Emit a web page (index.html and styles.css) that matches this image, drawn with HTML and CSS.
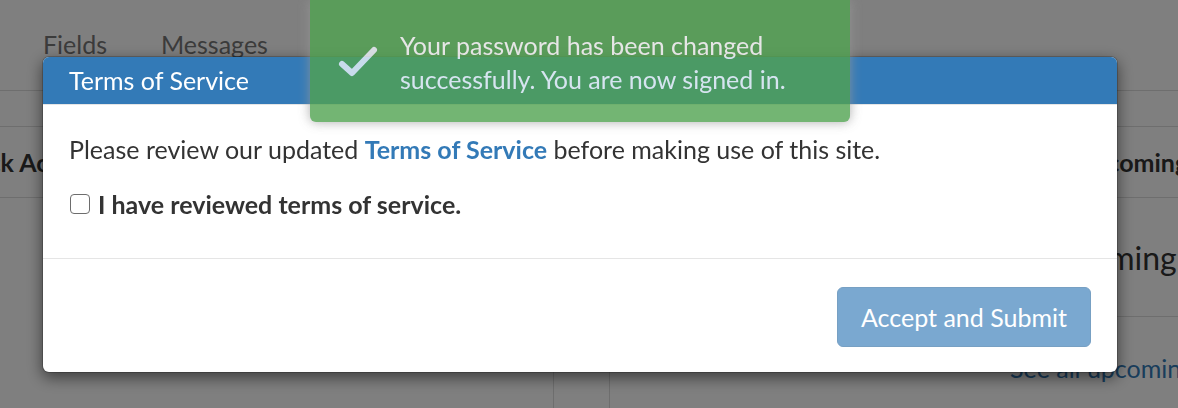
FILE: index.html
```html
<!DOCTYPE html>
<html lang="en">
<head>
<meta charset="utf-8">
<title>Terms of Service</title>
<link rel="stylesheet" href="styles.css">
</head>
<body>
<div class="page">
  <nav class="tabs">
    <a class="tab">Fields</a>
    <a class="tab">Messages</a>
  </nav>
  <div class="columns">
    <section class="col col-left">
      <div class="panel-head"><h3 class="head-left">Quick Access</h3></div>
    </section>
    <section class="col col-right">
      <div class="panel-head"><h3 class="head-right">Upcoming Events</h3></div>
      <div class="panel-row"><span class="big">Upcoming</span></div>
      <a class="more">See all upcoming events</a>
    </section>
  </div>
</div>

<div class="backdrop"></div>

<div class="modal" role="dialog">
  <div class="modal-header"><h4 class="modal-title">Terms of Service</h4></div>
  <div class="modal-body">
    <p class="intro">Please review our updated <a class="link">Terms of Service</a> before making use of this site.</p>
    <label class="check"><input type="checkbox" class="box"> I have reviewed terms of service.</label>
  </div>
  <div class="modal-footer">
    <button class="btn" disabled>Accept and Submit</button>
  </div>
</div>

<div class="toast">
  <svg class="toast-icon" width="44" height="36" viewBox="0 0 44 36" aria-hidden="true">
    <path d="M6 20 L16 29 L38 6" fill="none" stroke="#eef4fa" stroke-width="6" stroke-linecap="round" stroke-linejoin="round"/>
  </svg>
  <div class="toast-msg">Your password has been changed successfully. You are now signed in.</div>
</div>
</body>
</html>
```

FILE: styles.css
```css
html, body {
  margin: 0;
  padding: 0;
}
body {
  width: 1178px;
  height: 408px;
  overflow: hidden;
  background: #ffffff;
  font-family: Lato, "Open Sans", "Liberation Sans", sans-serif;
  color: #333333;
}

.page {
  display: flex;
  flex-direction: column;
}

.tabs {
  display: flex;
  height: 91px;
  box-sizing: border-box;
  border-bottom: 1px solid #dddddd;
  padding: 28px 0 0 43px;
  gap: 54px;
}
.tab {
  font-size: 25px;
  line-height: 32px;
  color: #777777;
}

.columns {
  display: flex;
  gap: 55px;
}
.col {
  flex: 0 0 auto;
}
.col-left {
  width: 553px;
  border-right: 1px solid #dddddd;
  height: 320px;
}
.col-right {
  flex: 1 1 auto;
  border-left: 1px solid #dddddd;
  height: 320px;
  overflow: hidden;
}
.panel-head {
  margin-top: 35px;
  height: 70px;
  border-top: 1px solid #dddddd;
  border-bottom: 1px solid #dddddd;
  display: flex;
  align-items: center;
}
.panel-head h3 {
  margin: 0;
  font-size: 25px;
  font-weight: 700;
  white-space: nowrap;
}
.head-left {
  margin-left: -52px !important;
}
.head-right {
  padding-left: 465px;
}
.panel-row {
  height: 118px;
  border-bottom: 1px solid #dddddd;
  display: flex;
  align-items: center;
  padding-left: 424px;
}
.big {
  font-size: 32px;
  white-space: nowrap;
}
.more {
  display: block;
  padding: 36px 0 0 400px;
  font-size: 25px;
  color: #337ab7;
  white-space: nowrap;
}

.backdrop {
  position: fixed;
  inset: 0;
  background: rgba(0, 0, 0, 0.5);
}

.modal {
  position: fixed;
  left: 42px;
  top: 56px;
  width: 1076px;
  box-sizing: border-box;
  background: #ffffff;
  border: 1px solid rgba(0, 0, 0, 0.2);
  border-radius: 7px;
  box-shadow: 0 5px 15px rgba(0, 0, 0, 0.5);
  background-clip: padding-box;
  overflow: hidden;
}
.modal-header {
  background: #337ab7;
  height: 47px;
  border-bottom: 1px solid #e5e5e5;
  padding: 0 26px;
  display: flex;
  align-items: center;
}
.modal-title {
  margin: 0 0 1px;
  color: #ffffff;
  font-size: 25px;
  font-weight: 400;
}
.modal-body {
  padding: 29px 26px 39px;
}
.intro {
  margin: 0;
  font-size: 25px;
  line-height: 30px;
}
.link {
  color: #337ab7;
  font-weight: 700;
}
.check {
  margin-top: 25px;
  display: flex;
  align-items: center;
  gap: 8px;
  font-size: 25px;
  font-weight: 700;
  line-height: 30px;
}
.box {
  appearance: none;
  -webkit-appearance: none;
  margin: 0 0 0 1px;
  width: 20px;
  height: 20px;
  box-sizing: border-box;
  border: 1.5px solid #6d6d6d;
  border-radius: 4px;
  background: #ffffff;
}
.modal-footer {
  border-top: 1px solid #e5e5e5;
  padding: 28px 26px 25px;
  display: flex;
  justify-content: flex-end;
}
.btn {
  width: 254px;
  height: 60px;
  border: 1px solid #2e6da4;
  border-radius: 6px;
  background: #337ab7;
  color: #ffffff;
  font-family: inherit;
  font-size: 25px;
  opacity: 0.65;
  padding: 0;
}

.toast {
  position: fixed;
  left: 310px;
  top: 0;
  width: 540px;
  height: 122px;
  box-sizing: border-box;
  background: #51a351;
  opacity: 0.8;
  border-radius: 0 0 6px 6px;
  box-shadow: 0 0 12px #999999;
  color: #ffffff;
  display: flex;
  align-items: flex-start;
  padding: 28px 10px 0 26px;
  gap: 20px;
}
.toast-icon {
  margin-top: 16px;
  flex: 0 0 auto;
}
.toast-msg {
  font-size: 25px;
  line-height: 34px;
  width: 430px;
}
```
